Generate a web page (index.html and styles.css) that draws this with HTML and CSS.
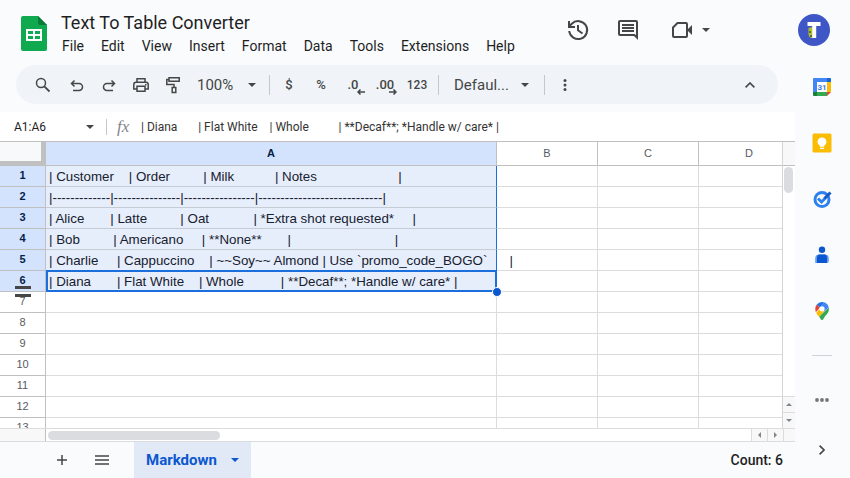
FILE: index.html
```html
<!DOCTYPE html>
<html lang="en">
<head>
<meta charset="utf-8">
<title>Text To Table Converter</title>
<link rel="stylesheet" href="styles.css">
</head>
<body>
<header class="top">
  <svg class="logo" viewBox="0 0 26 35" aria-hidden="true">
    <path fill="#0fa94f" d="M2 0h15l9 9v24a2 2 0 0 1-2 2H2a2 2 0 0 1-2-2V2a2 2 0 0 1 2-2z"/>
    <path fill="#087a3a" d="M17 0l9 9h-7a2 2 0 0 1-2-2z"/>
    <path fill="none" stroke="#fff" stroke-width="2" d="M6 14h14v10H6zM6 19h14M13 14v10"/>
  </svg>
  <div class="heading">
    <input class="doc-title" aria-label="Document title" value="Text To Table Converter">
    <nav class="menus" aria-label="Menu bar">
      <button>File</button><button>Edit</button><button>View</button><button>Insert</button><button>Format</button><button>Data</button><button>Tools</button><button>Extensions</button><button>Help</button>
    </nav>
  </div>
  <div class="actions">
    <button class="action" aria-label="Version history"><svg width="24" height="24" viewBox="0 0 24 24"><g fill="none" stroke="#444746" stroke-width="2"><path d="M3.200 13a9 9 0 1 0 2.600-7.300L3 8.500"/><path d="M3 3v6h6M12 7v5.300l4.500 3.200"/></g></svg></button>
    <button class="action" aria-label="Comments"><svg width="24" height="24" viewBox="0 0 24 24"><path fill="#444746" d="M22 22l-4-4H4a2 2 0 0 1-2-2V4c0-1.100.9-2 2-2h16a2 2 0 0 1 2 2zM20 4H4v12h14.800l1.200 1.200zM6 6h12v2H6zm0 3h12v2H6zm0 3h12v2H6z"/></svg></button>
    <button class="action meet" aria-label="Join a call"><svg width="22" height="18" viewBox="0 0 22 18"><path fill="none" stroke="#444746" stroke-width="2" stroke-linejoin="round" d="M6.500 2H15a1 1 0 0 1 1 1v12a1 1 0 0 1-1 1H3a1 1 0 0 1-1-1V6.500z"/><path fill="#444746" d="M16 9l5-5v10z"/></svg><svg width="8" height="4" viewBox="0 0 8 4"><path fill="#444746" d="M0 0h8L4 4z"/></svg></button>
    <button class="avatar" aria-label="Account"><svg width="32" height="32" viewBox="0 0 32 32"><circle cx="16" cy="16" r="16" fill="#3f57c6"/><path fill="#b6bf2c" d="M10.500 14l4-1v11c-3 0-4-2-4-5z"/><path fill="#57722b" d="M11 17h2v2h-2zm1 4h2v2h-2z"/><path fill="#fff" d="M9.500 8h13v4h-4.300v12h-4V12H9.500z"/></svg></button>
  </div>
</header>

<div class="body">
  <main class="work">
    <div class="toolbar" role="toolbar" aria-label="Main toolbar">
      <button class="tool search" aria-label="Search menus"><svg width="16" height="16" viewBox="0 0 16 16"><g fill="none" stroke="#444746"><circle cx="6" cy="6" r="4.500" stroke-width="1.500"/><path stroke-width="1.800" d="M9.300 9.300l5.200 5.200"/></g></svg></button>
      <button class="tool" aria-label="Undo"><svg width="14" height="14" viewBox="0 0 14 14"><path fill="none" stroke="#444746" stroke-width="1.500" d="M4.500 2.500L1.500 5.500l3 3M1.500 5.500H9a3.500 3.500 0 0 1 0 7H3"/></svg></button>
      <button class="tool" aria-label="Redo"><svg width="14" height="14" viewBox="0 0 14 14"><path fill="none" stroke="#444746" stroke-width="1.500" d="M9.500 2.500l3 3-3 3M12.500 5.500H5a3.500 3.500 0 0 0 0 7h6"/></svg></button>
      <button class="tool" aria-label="Print"><svg width="16" height="16" viewBox="0 0 16 16"><path fill="none" stroke="#444746" stroke-width="1.500" d="M4 5V1.800h8V5M4 12H.8V7.500C.8 6 1.500 5.200 3 5.200h10c1.500 0 2.200.8 2.200 2.300V12H12M4 9.300h8v5H4z"/><path fill="#444746" d="M12 7h1.500v1.500H12z"/></svg></button>
      <button class="tool" aria-label="Paint format"><svg width="16" height="18" viewBox="0 0 16 18"><path fill="none" stroke="#444746" stroke-width="1.500" d="M4 1.800h10.200v3.500H4zM4 3.500H1.800v5H9V11M7.200 11.500h3.600v5H7.200z"/></svg></button>
      <div class="pick zoom"><select aria-label="Zoom"><option>100%</option></select><svg width="8" height="4" viewBox="0 0 8 4"><path fill="#444746" d="M0 0h8L4 4z"/></svg></div>
      <span class="rule"></span>
      <button class="tool text" aria-label="Format as currency">$</button>
      <button class="tool text" aria-label="Format as percent">%</button>
      <button class="tool text stack" aria-label="Decrease decimal places">.0<svg width="8" height="6" viewBox="0 0 8 6"><path fill="none" stroke="#444746" stroke-width="1.500" d="M8 3H1M3.500.5L1 3l2.500 2.500"/></svg></button>
      <button class="tool text stack" aria-label="Increase decimal places">.00<svg width="8" height="6" viewBox="0 0 8 6"><path fill="none" stroke="#444746" stroke-width="1.500" d="M0 3h7M4.500.5L7 3 4.500 5.500"/></svg></button>
      <button class="tool text small" aria-label="More formats">123</button>
      <span class="rule"></span>
      <div class="pick font"><select aria-label="Font"><option>Defaul...</option></select><svg width="8" height="4" viewBox="0 0 8 4"><path fill="#444746" d="M0 0h8L4 4z"/></svg></div>
      <span class="rule"></span>
      <button class="tool more" aria-label="More"><svg width="4" height="12" viewBox="0 0 4 12"><g fill="#444746"><circle cx="2" cy="1.500" r="1.500"/><circle cx="2" cy="6" r="1.500"/><circle cx="2" cy="10.500" r="1.500"/></g></svg></button>
      <button class="tool hide" aria-label="Hide the menus"><svg width="10" height="6" viewBox="0 0 10 6"><path fill="none" stroke="#444746" stroke-width="1.600" d="M.6 5.400L5 1l4.400 4.400"/></svg></button>
    </div>

    <div class="formula">
      <input class="name-box" aria-label="Name box" value="A1:A6">
      <button class="name-list" aria-label="Named ranges"><svg width="8" height="4" viewBox="0 0 8 4"><path fill="#444746" d="M0 0h8L4 4z"/></svg></button>
      <span class="rule"></span>
      <span class="fx" aria-hidden="true">fx</span>
      <input class="formula-input" aria-label="Formula" value="| Diana       | Flat White    | Whole          | **Decaf**; *Handle w/ care* |">
    </div>

    <section class="sheet" aria-label="Sheet">
      <div class="cells">
        <table>
          <colgroup><col class="c-num"><col class="c-a"><col class="c-std"><col class="c-std"><col class="c-std"></colgroup>
          <thead><tr><td class="corner"></td><th class="on" scope="col">A</th><th scope="col">B</th><th scope="col">C</th><th scope="col">D</th></tr></thead>
          <tbody>
            <tr class="sel"><th scope="row">1</th><td>| Customer    | Order         | Milk           | Notes                      |</td><td></td><td></td><td></td></tr>
            <tr class="sel"><th scope="row">2</th><td>|-------------|---------------|----------------|----------------------------|</td><td></td><td></td><td></td></tr>
            <tr class="sel"><th scope="row">3</th><td>| Alice       | Latte         | Oat            | *Extra shot requested*     |</td><td></td><td></td><td></td></tr>
            <tr class="sel"><th scope="row">4</th><td>| Bob         | Americano     | **None**       |                            |</td><td></td><td></td><td></td></tr>
            <tr class="sel"><th scope="row">5</th><td>| Charlie     | Cappuccino    | ~~Soy~~ Almond | Use `promo_code_BOGO`      |</td><td></td><td></td><td></td></tr>
            <tr class="sel"><th scope="row" class="grip">6</th><td class="active">| Diana       | Flat White    | Whole          | **Decaf**; *Handle w/ care* |</td><td></td><td></td><td></td></tr>
            <tr><th scope="row">7</th><td></td><td></td><td></td><td></td></tr>
            <tr><th scope="row">8</th><td></td><td></td><td></td><td></td></tr>
            <tr><th scope="row">9</th><td></td><td></td><td></td><td></td></tr>
            <tr><th scope="row">10</th><td></td><td></td><td></td><td></td></tr>
            <tr><th scope="row">11</th><td></td><td></td><td></td><td></td></tr>
            <tr><th scope="row">12</th><td></td><td></td><td></td><td></td></tr>
            <tr><th scope="row">13</th><td></td><td></td><td></td><td></td></tr>
          </tbody>
        </table>
      </div>
      <div class="vbar">
        <div class="vhead"></div>
        <div class="vthumb"></div>
        <button class="step" aria-label="Scroll up"><svg width="6" height="3" viewBox="0 0 6 3"><path fill="#80868b" d="M0 3h6L3 0z"/></svg></button>
        <button class="step" aria-label="Scroll down"><svg width="6" height="3" viewBox="0 0 6 3"><path fill="#80868b" d="M0 0h6L3 3z"/></svg></button>
      </div>
      <div class="hbar">
        <div class="hhead"></div>
        <div class="hthumb"></div>
        <button class="step" aria-label="Scroll left"><svg width="3" height="6" viewBox="0 0 3 6"><path fill="#80868b" d="M3 0v6L0 3z"/></svg></button>
        <button class="step" aria-label="Scroll right"><svg width="3" height="6" viewBox="0 0 3 6"><path fill="#80868b" d="M0 0v6l3-3z"/></svg></button>
      </div>
      <div class="bar-end"></div>
    </section>

    <footer class="tabs">
      <button class="tool" aria-label="Add sheet"><svg width="12" height="12" viewBox="0 0 12 12"><path stroke="#444746" stroke-width="1.500" d="M6 1v10M1 6h10"/></svg></button>
      <button class="tool" aria-label="All sheets"><svg width="14" height="10" viewBox="0 0 14 10"><path stroke="#444746" stroke-width="1.500" d="M0 1h14M0 5h14M0 9h14"/></svg></button>
      <button class="tab">Markdown<svg width="8" height="4" viewBox="0 0 8 4"><path fill="#0b57d0" d="M0 0h8L4 4z"/></svg></button>
      <output class="count">Count: 6</output>
    </footer>
  </main>

  <aside class="side" aria-label="Side panel">
    <button class="app" aria-label="Calendar"><svg width="20" height="20" viewBox="0 0 20 20"><path fill="#fff" d="M5 5h10v10H5z"/><path fill="#4285f4" d="M2 1h13v4H5v10H1V2a1 1 0 0 1 1-1z"/><path fill="#1967d2" d="M15 1h3a1 1 0 0 1 1 1v3h-4z"/><path fill="#fbbc04" d="M15 5h4v10h-4z"/><path fill="#34a853" d="M5 15h10v4H5z"/><path fill="#188038" d="M1 15h4v4H2a1 1 0 0 1-1-1z"/><path fill="#ea4335" d="M15 15h4l-4 4z"/><text x="10" y="13" text-anchor="middle" class="day">31</text></svg></button>
    <button class="app" aria-label="Keep"><svg width="20" height="20" viewBox="0 0 20 20"><rect x=".5" y=".5" width="19" height="19" rx="1.500" fill="#fbbc04"/><path fill="#fff" d="M10 4.500a4.300 4.300 0 0 1 2.300 8v1.300H7.700v-1.300a4.300 4.300 0 0 1 2.300-8zM8 14.700h4V16H8z"/></svg></button>
    <button class="app" aria-label="Tasks"><svg width="20" height="20" viewBox="0 0 20 20"><circle cx="10" cy="10.500" r="7" fill="none" stroke="#2e80ef" stroke-width="3"/><path fill="none" stroke="#2e80ef" stroke-width="3" d="M6 9.500l3.500 3.500 4-4"/><path fill="none" stroke="#1559c7" stroke-width="3" d="M12.500 9.500L18.500 3.500"/></svg></button>
    <button class="app" aria-label="Contacts"><svg width="20" height="20" viewBox="0 0 20 20"><circle cx="10" cy="4.700" r="3.200" fill="#0b57d0"/><path fill="#629af5" d="M3.200 18v-4.500A4 4 0 0 1 7 9.500h6a4 4 0 0 1 3.800 4V16a2 2 0 0 1-2 2z"/><path fill="#0b57d0" d="M5 18v-5c0-2.500 1-3.500 3-3.500h4c2 0 3 1 3 3.500v5z"/></svg></button>
    <button class="app" aria-label="Maps"><svg width="20" height="20" viewBox="0 0 20 20"><path fill="#34a853" d="M16.700 6.500c1 4.500-1.800 6.500-3.800 9-1.300 1.600-1.400 3.500-2.900 3.500s-1.600-1.900-2.900-3.500z"/><path fill="#fbbc04" d="M12.500 9.800l-5.400 6C6 14.500 4.900 13.300 4.200 12L8 7.500z"/><path fill="#ea4335" d="M4.800 3.600L8 6.500 3.800 11.300C3 8.500 3 5.700 4.800 3.600z"/><path fill="#1a73e8" d="M4.800 3.600A6.800 6.800 0 0 1 12 1.300L8 6.500z"/><path fill="#4285f4" d="M12 1.300a6.800 6.800 0 0 1 4.700 5.200L12.500 10 8 6z"/><circle cx="10" cy="7.800" r="2.600" fill="#fff"/></svg></button>
    <hr>
    <button class="app" aria-label="More add-ons"><svg width="14" height="4" viewBox="0 0 14 4"><g fill="#747775"><circle cx="2" cy="2" r="1.900"/><circle cx="7" cy="2" r="1.900"/><circle cx="12" cy="2" r="1.900"/></g></svg></button>
    <button class="app collapse" aria-label="Hide side panel"><svg width="6" height="10" viewBox="0 0 6 10"><path fill="none" stroke="#444746" stroke-width="1.600" d="M.6.600L5 5 .6 9.400"/></svg></button>
  </aside>
</div>
</body>
</html>
```
FILE: styles.css
```css
*, *::before, *::after { box-sizing: border-box; }

body {
  margin: 0;
  height: 100vh;
  display: flex;
  flex-direction: column;
  overflow: hidden;
  background: #f9fbfd;
  color: #1f1f1f;
  font-family: Roboto, "Liberation Sans", sans-serif;
  font-size: 14px;
}

button, input, select {
  margin: 0;
  padding: 0;
  border: 0;
  background: none;
  color: inherit;
  font: inherit;
}

svg { display: block; flex: none; }

/* Header */
.top {
  display: flex;
  flex: none;
  height: 65px;
  padding-left: 21px;
  padding-right: 20px;
}
.logo { width: 26px; height: 35px; margin-top: 16px; }
.heading { flex: 1; min-width: 0; padding: 10px 0 0 14px; }
.doc-title {
  display: block;
  width: 240px;
  height: 24px;
  font-size: 18px;
}
.menus { display: flex; gap: 17px; padding: 2px 0 0 1px; }
.menus button { height: 20px; line-height: 20px; }
.actions { display: flex; align-items: center; height: 60px; }
.action { display: flex; align-items: center; margin-right: 26px; }
.meet { gap: 9px; margin: 0 88px 0 5px; }
.avatar { border-radius: 50%; }

/* Body */
.body { display: flex; flex: 1; min-height: 0; }
.work { display: flex; flex-direction: column; flex: 1; min-width: 0; }

/* Toolbar */
.toolbar {
  display: flex;
  flex: none;
  align-items: center;
  height: 39px;
  margin: 0 17px 8px 16px;
  padding: 0 12px 0 11px;
  border-radius: 20px;
  background: #f0f4f9;
  color: #444746;
}
.tool {
  display: flex;
  flex: none;
  align-items: center;
  justify-content: center;
  width: 32px;
  height: 32px;
}
.search { margin-right: 2px; }
.text { font-size: 13px; font-weight: 500; }
.small { font-size: 12px; }
.stack { position: relative; }
.stack svg { position: absolute; right: 4px; bottom: 6px; }
.rule { flex: none; width: 1px; height: 20px; background: #c7c7c7; }
.pick { display: grid; align-items: center; }
.pick select, .pick svg { grid-area: 1 / 1; }
.pick svg { justify-self: end; pointer-events: none; }
.pick select { appearance: none; width: 100%; height: 30px; font-size: 15px; }
.zoom { width: 59px; margin: 0 13px 0 8px; }
.font { width: 75px; margin: 0 15px; }
.rule + .text { margin-left: 3px; }
.rule + .more { margin-left: 4px; }
.text + .rule { margin-left: 5px; }
.hide { margin-left: auto; }

/* Formula bar */
.formula {
  display: flex;
  flex: none;
  align-items: center;
  height: 29px;
  padding-left: 14px;
  border-radius: 0 4px 0 0;
  background: #fff;
  font-size: 12px;
}
.name-box { width: 68px; height: 20px; }
.name-list { display: flex; justify-content: center; width: 16px; margin-right: 8px; }
.formula .rule { height: 16px; }
.fx {
  width: 24px;
  margin: 0 0 0 10px;
  color: #80868b;
  font: italic 17px "Liberation Serif", serif;
}
.formula-input { flex: 1; min-width: 0; height: 20px; color: #333; }

/* Sheet */
.sheet {
  display: grid;
  flex: 1;
  min-height: 0;
  grid-template: minmax(0, 1fr) 13px / minmax(0, 1fr) 12px;
  border-top: 1px solid #c0c0c0;
  border-bottom: 1px solid #dadce0;
  background: #fff;
}
.cells { overflow: hidden; border-right: 1px solid #d5d5d5; }

table {
  width: 800px;
  table-layout: fixed;
  border-collapse: separate;
  border-spacing: 0;
  font-family: "Liberation Sans", Arial, sans-serif;
}
.c-num { width: 46px; }
.c-a { width: 451px; }
.c-std { width: 101px; }

th, td {
  height: 21px;
  padding: 0;
  border: solid #dcdcdc;
  border-width: 0 1px 1px 0;
}
th {
  border-color: #c0c0c0;
  color: #575b5f;
  font-size: 11px;
  font-weight: 400;
  line-height: 16px;
  vertical-align: top;
  padding-top: 1px;
  text-align: center;
}
thead th, .corner { height: 24px; }
thead th { padding-top: 3px; }
.corner { border: solid #c0c0c0; border-width: 0 5px 5px 0; background: #f8f9fa; }
td {
  padding: 2px 0 0 3px;
  font-size: 10pt;
  line-height: 18px;
  color: #16202e;
  white-space: pre;
}
.on, .sel th { background: #d3e3fd; color: #041e49; font-weight: 700; }
.sel th + td {
  background: #e6eefc;
  border-right-color: #1a6fdc;
  border-bottom-color: #c6ccd4;
}

/* Active cell outline and fill handle */
.active { position: relative; }
.active::before {
  content: "";
  position: absolute;
  inset: -1px -1px -1px 0;
  border: 2px solid #1a6fdc;
}
.active::after {
  content: "";
  position: absolute;
  right: -6px;
  bottom: -6px;
  width: 10px;
  height: 10px;
  border: 1px solid #fff;
  border-radius: 50%;
  background: #0b57d0;
}

/* Row resize grip */
.grip { position: relative; }
.grip::after {
  content: "";
  position: absolute;
  z-index: 1;
  left: 15px;
  top: 15px;
  width: 16px;
  height: 11px;
  border: solid #444746;
  border-width: 3px 0;
}

/* Scroll bars */
.vbar, .hbar { display: flex; background: #fff; }
.vbar { flex-direction: column; }
.vhead { height: 24px; background: #f8f8f8; border-bottom: 1px solid #c0c0c0; }
.vthumb { width: 9px; height: 26px; margin: 1px 1px auto; border-radius: 5px; background: #dadce0; }
.step {
  display: flex;
  flex: none;
  align-items: center;
  justify-content: center;
  width: 16px;
  height: 16px;
  border: solid #dcdcdc;
  border-width: 0 0 0 1px;
  background: #f8f8f8;
}
.vbar .step { width: 100%; border-width: 1px 0 0; }
.hbar .step { height: 100%; }
.hbar { border-top: 1px solid #dcdcdc; align-items: center; }
.hhead { width: 46px; height: 100%; background: #f8f8f8; border-right: 1px solid #c0c0c0; }
.hthumb { width: 172px; height: 9px; margin: 0 auto 0 2px; border-radius: 5px; background: #dadce0; }
.bar-end { border: solid #dcdcdc; border-width: 1px 0 0 1px; background: #f8f8f8; }

/* Sheet tabs */
.tabs { display: flex; flex: none; align-items: center; height: 36px; padding: 0 12px 0 46px; }
.tabs .tool + .tool { margin-left: 8px; }
.tab {
  display: flex;
  align-items: center;
  gap: 14px;
  height: 36px;
  margin-left: 16px;
  padding: 0 12px;
  background: #e1e9f7;
  color: #0b57d0;
  font-size: 15px;
  font-weight: 700;
}
.count { margin-left: auto; font-weight: 500; }

/* Side panel */
.side {
  display: flex;
  flex: none;
  flex-direction: column;
  align-items: center;
  gap: 24px;
  width: 55px;
  padding: 6px 1px 0 0;
}
.app { display: flex; flex: none; align-items: center; justify-content: center; width: 32px; height: 32px; }
.side hr { width: 20px; height: 1px; margin: 4px 0 4px; border: 0; background: #d0d3d6; }
.collapse { margin-top: -6px; }
.day { fill: #3f7be8; font: 700 8px Roboto, sans-serif; }
```
